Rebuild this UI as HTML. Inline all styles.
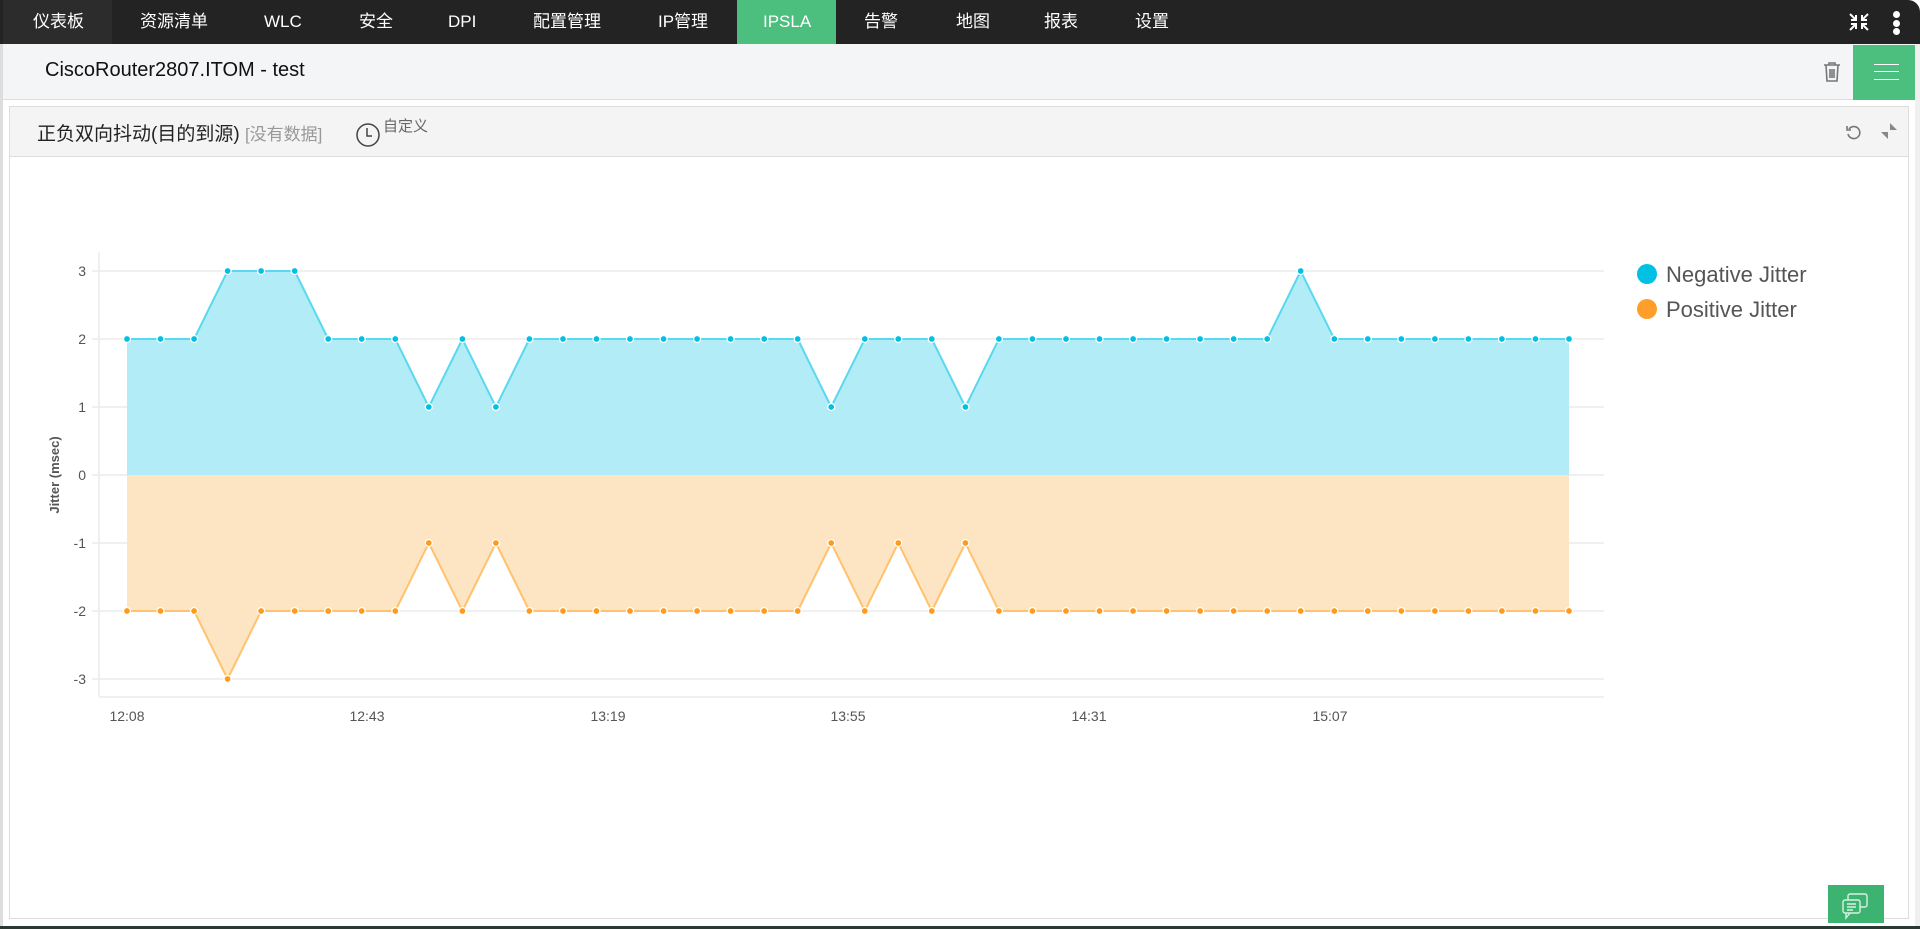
<!DOCTYPE html>
<html><head><meta charset="utf-8"><style>
*{margin:0;padding:0;box-sizing:border-box}
body{width:1920px;height:929px;overflow:hidden;background:#fff;font-family:"Liberation Sans","Noto Sans CJK SC",sans-serif;position:relative}
.nav{position:absolute;left:0;top:0;width:1920px;height:44px;background:#232323;border-radius:0 12px 0 0}
.nav span{position:absolute;top:0;height:44px;line-height:44px;color:#fff;font-size:17px}
.hdr{position:absolute;left:3px;top:44px;width:1912px;height:56px;background:#f4f5f7;border-bottom:1px solid #ddd}
.panel{position:absolute;left:9px;top:106px;width:1900px;height:813px;border:1px solid #ddd;background:#fff}
.ph{height:50px;background:#f4f4f4;border-bottom:1px solid #ddd;position:relative}
</style></head><body>
<div style="position:absolute;left:0;top:0;width:3px;height:929px;background:#ddd"></div>
<div style="position:absolute;right:0;top:40px;width:5px;height:889px;background:#f0f0f0"></div>
<div class="nav">
<div style="position:absolute;left:3px;top:0;width:109px;height:44px;background:#2c2c2c"></div>
<div style="position:absolute;left:737px;top:0;width:99px;height:44px;background:#4cbe7e"></div>
<span style="left:33px">仪表板</span><span style="left:140px">资源清单</span><span style="left:264px">WLC</span><span style="left:359px">安全</span><span style="left:448px">DPI</span><span style="left:533px">配置管理</span><span style="left:658px">IP管理</span><span style="left:763px">IPSLA</span><span style="left:864px">告警</span><span style="left:956px">地图</span><span style="left:1044px">报表</span><span style="left:1135px">设置</span>
<svg style="position:absolute;left:1848px;top:12px" width="22" height="20" viewBox="0 0 22 20" stroke="#fff" stroke-width="2" fill="none"><path d="M2 2l6 6M8 3v5H3M20 2l-6 6M14 3v5h5M2 18l6-6M3 12h5v5M20 18l-6-6M19 12h-5v5"/></svg>
<div style="position:absolute;left:1893px;top:11px;width:7px;height:7px;border-radius:50%;background:#fff"></div>
<div style="position:absolute;left:1893px;top:20px;width:7px;height:7px;border-radius:50%;background:#fff"></div>
<div style="position:absolute;left:1893px;top:28px;width:7px;height:7px;border-radius:50%;background:#fff"></div>
</div>
<div class="hdr">
<div style="position:absolute;left:42px;top:15px;font-size:20px;color:#111">CiscoRouter2807.ITOM - test</div>
<svg style="position:absolute;left:1820px;top:17px" width="18" height="22" viewBox="0 0 18 22" stroke="#777" stroke-width="1.6" fill="none"><path d="M1 4h16M6 4V2h6v2M3 4l1 16h10l1-16M7 8v9M9 8v9M11 8v9"/></svg>
<div style="position:absolute;left:1850px;top:1px;width:62px;height:55px;background:#4cbe7e"></div>
<div style="position:absolute;left:1871px;top:20px;width:25px;height:1px;background:#fff"></div>
<div style="position:absolute;left:1871px;top:27px;width:25px;height:1px;background:#fff"></div>
<div style="position:absolute;left:1871px;top:35px;width:25px;height:1px;background:#fff"></div>
</div>
<div class="panel">
<div class="ph">
<div style="position:absolute;left:27px;top:12px;font-size:19px;color:#222">正负双向抖动(目的到源) <span style="color:#999;font-size:17px">[没有数据]</span></div>
<svg style="position:absolute;left:345px;top:15px" width="26" height="26" viewBox="0 0 26 26" fill="none" stroke="#444" stroke-width="1.5"><circle cx="13" cy="13" r="11"/><path d="M12 6v8h5"/></svg>
<div style="position:absolute;left:373px;top:8px;font-size:15px;color:#666">自定义</div>
<svg style="position:absolute;left:1835px;top:16px" width="18" height="18" viewBox="0 0 18 18" fill="none" stroke="#777" stroke-width="1.6"><path d="M4 6a6 6 0 1 1-1 5"/><path d="M2 3v4h4" fill="none"/></svg>
<svg style="position:absolute;left:1870px;top:15px" width="18" height="18" viewBox="0 0 18 18" fill="#888"><path d="M10 1l7 7h-7zM8 17l-7-7h7z"/></svg>
</div>
</div>
<svg style="position:absolute;left:0;top:0" width="1920" height="929">
<defs>
<marker id="mb" markerWidth="10" markerHeight="10" refX="5" refY="5" markerUnits="userSpaceOnUse"><circle cx="5" cy="5" r="3.5" fill="#00c0e4" stroke="#fff" stroke-width="1.3"/></marker>
<marker id="mo" markerWidth="10" markerHeight="10" refX="5" refY="5" markerUnits="userSpaceOnUse"><circle cx="5" cy="5" r="3.5" fill="#ff9a1a" stroke="#fff" stroke-width="1.3"/></marker>
</defs>
<g stroke="#ececec" stroke-width="1.5">
<line x1="92" y1="271" x2="1604" y2="271"/><line x1="92" y1="339" x2="1604" y2="339"/><line x1="92" y1="407" x2="1604" y2="407"/><line x1="92" y1="475" x2="1604" y2="475"/><line x1="92" y1="543" x2="1604" y2="543"/><line x1="92" y1="611" x2="1604" y2="611"/><line x1="92" y1="679" x2="1604" y2="679"/>
<line x1="99" y1="252" x2="99" y2="697"/><line x1="99" y1="697" x2="1604" y2="697"/>
</g>
<g font-size="14" fill="#555" text-anchor="end">
<text x="86" y="276">3</text><text x="86" y="344">2</text><text x="86" y="412">1</text><text x="86" y="480">0</text><text x="86" y="548">-1</text><text x="86" y="616">-2</text><text x="86" y="684">-3</text>
</g>
<text transform="translate(59,475) rotate(-90)" font-size="13" font-weight="bold" fill="#555" text-anchor="middle">Jitter (msec)</text>
<g font-size="14" fill="#555" text-anchor="middle">
<text x="127" y="721">12:08</text><text x="367" y="721">12:43</text><text x="608" y="721">13:19</text><text x="848" y="721">13:55</text><text x="1089" y="721">14:31</text><text x="1330" y="721">15:07</text>
</g>
<polygon fill="#b2ecf6" points="127,475 127,339 160.5,339 194.1,339 227.6,271 261.1,271 294.7,271 328.2,339 361.7,339 395.3,339 428.8,407 462.4,339 495.9,407 529.4,339 797.7,339 831.2,407 864.8,339 931.8,339 965.4,407 998.9,339 1267.2,339 1300.7,271 1334.3,339 1569,339 1569,475"/>
<polygon fill="#fde4c3" points="127,475 127,611 194.1,611 227.6,679 261.1,611 395.3,611 428.8,543 462.4,611 495.9,543 529.4,611 797.7,611 831.2,543 864.8,611 898.3,543 931.8,611 965.4,543 998.9,611 1569,611 1569,475"/>
<polyline fill="none" stroke="#5ad8ee" stroke-width="2" marker-start="url(#mb)" marker-mid="url(#mb)" marker-end="url(#mb)" points="127,339 160.5,339 194.1,339 227.6,271 261.1,271 294.7,271 328.2,339 361.7,339 395.3,339 428.8,407 462.4,339 495.9,407 529.4,339 563,339 596.5,339 630,339 663.6,339 697.1,339 730.6,339 764.2,339 797.7,339 831.2,407 864.8,339 898.3,339 931.8,339 965.4,407 998.9,339 1032.4,339 1066,339 1099.5,339 1133.1,339 1166.6,339 1200.1,339 1233.7,339 1267.2,339 1300.7,271 1334.3,339 1367.8,339 1401.3,339 1434.9,339 1468.4,339 1501.9,339 1535.5,339 1569,339"/>
<polyline fill="none" stroke="#ffc26e" stroke-width="2" marker-start="url(#mo)" marker-mid="url(#mo)" marker-end="url(#mo)" points="127,611 160.5,611 194.1,611 227.6,679 261.1,611 294.7,611 328.2,611 361.7,611 395.3,611 428.8,543 462.4,611 495.9,543 529.4,611 563,611 596.5,611 630,611 663.6,611 697.1,611 730.6,611 764.2,611 797.7,611 831.2,543 864.8,611 898.3,543 931.8,611 965.4,543 998.9,611 1032.4,611 1066,611 1099.5,611 1133.1,611 1166.6,611 1200.1,611 1233.7,611 1267.2,611 1300.7,611 1334.3,611 1367.8,611 1401.3,611 1434.9,611 1468.4,611 1501.9,611 1535.5,611 1569,611"/>
<circle cx="1647" cy="274" r="10" fill="#00c0e4"/><circle cx="1647" cy="309" r="10" fill="#ff9f2a"/>
<text x="1666" y="282" font-size="22" fill="#555">Negative Jitter</text>
<text x="1666" y="317" font-size="22" fill="#555">Positive Jitter</text>
</svg>
<div style="position:absolute;left:1828px;top:885px;width:56px;height:38px;background:#3cb371"></div>
<svg style="position:absolute;left:1840px;top:892px" width="30" height="28" viewBox="0 0 30 28" fill="none" stroke="#d8f2e2" stroke-width="1.4"><rect x="8" y="2" width="19" height="13" rx="2"/><rect x="3" y="8" width="17" height="13" rx="2" fill="#3cb371"/><path d="M6 21v5l4-5M7 12h9M7 15h9M7 18h6"/></svg>
<div style="position:absolute;left:0;top:926px;width:1920px;height:3px;background:#2a3a33"></div>
</body></html>
